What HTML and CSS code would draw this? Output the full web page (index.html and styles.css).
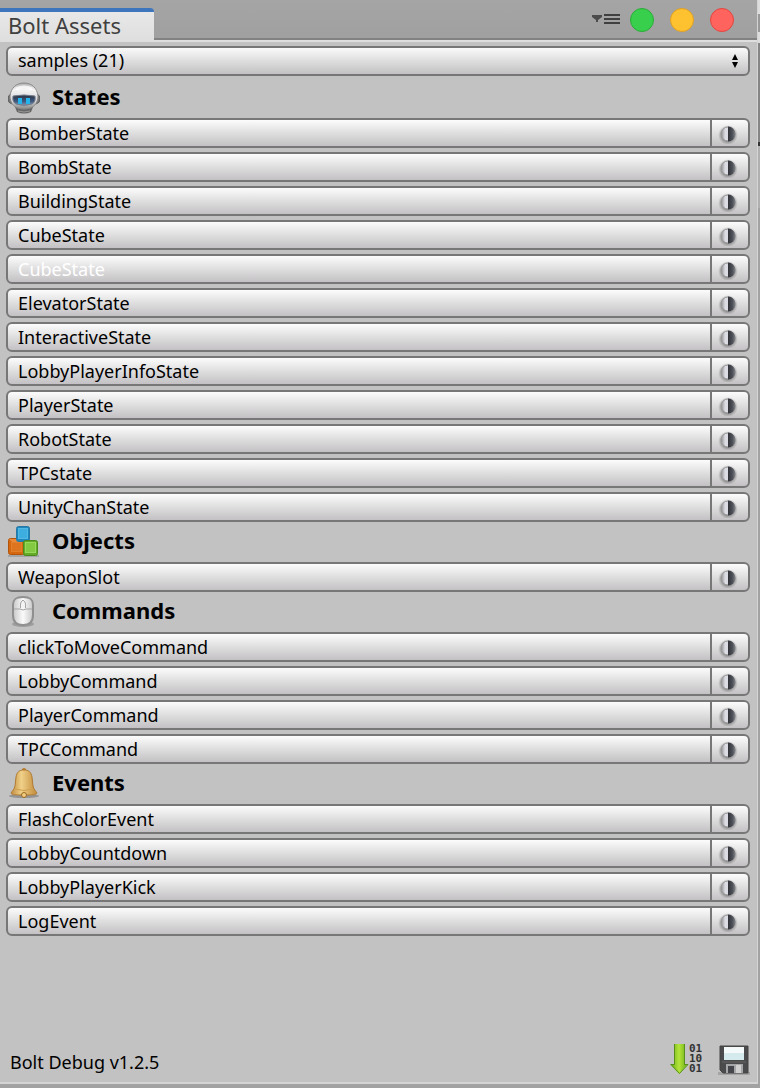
FILE: index.html
```
<!DOCTYPE html>
<html lang="en">
<head>
  <meta charset="UTF-8">
  <title>Bolt Assets</title>
  <link rel="stylesheet" href="styles.css">
</head>
<body>

<!-- shared gradients and the filter icon -->
<svg class="defs" aria-hidden="true">
  <defs>
    <linearGradient id="dark" x1="0" x2="1"><stop offset="0" stop-color="#303238"/><stop offset="0.6" stop-color="#50525a"/><stop offset="1" stop-color="#85878e"/></linearGradient>
    <linearGradient id="light" x1="0" x2="1"><stop offset="0" stop-color="#8c8c8c"/><stop offset="0.3" stop-color="#dcdce4"/></linearGradient>
    <radialGradient id="shade"><stop offset="0.6" stop-color="#555" stop-opacity="0.6"/><stop offset="1" stop-color="#777" stop-opacity="0"/></radialGradient>
    <symbol id="half" viewBox="0 0 20 20">
      <ellipse cx="10" cy="11" rx="10" ry="10" fill="url(#shade)"/>
      <circle cx="10" cy="10" r="7" fill="url(#light)" stroke="#999"/>
      <path d="M10 2.500a7.500 7.500 0 0 1 0 15z" fill="url(#dark)"/>
    </symbol>
  </defs>
</svg>

<div class="window">
  <header class="titlebar">
    <h1 class="tab">Bolt Assets</h1>
    <div class="controls">
      <button class="menu" aria-label="Window menu">
        <svg width="28" height="12" viewBox="0 0 28 12"><path d="M0 1h10v2L6 6v2H4V6L0 3z" fill="#4c4c4c"/><path d="M12 1h16M12 5h16M12 9h16" stroke="#404040" stroke-width="2"/></svg>
      </button>
      <button class="dot green" aria-label="Zoom"></button>
      <button class="dot yellow" aria-label="Minimize"></button>
      <button class="dot red" aria-label="Close"></button>
    </div>
  </header>

  <main class="content">
    <div class="picker">
      <select class="group" aria-label="Asset group">
        <option>samples (21)</option>
      </select>
      <svg class="arrows" width="6" height="14" viewBox="0 0 6 14"><path d="M3 0l3 6H0zM3 14l3-6H0z"/></svg>
    </div>

    <h2 class="heading">
      <svg class="icon" viewBox="0 0 32 32">
        <defs>
          <linearGradient id="skull" x2="0" y2="1"><stop offset="0" stop-color="#aaa"/><stop offset="0.25" stop-color="#f4f4f5"/><stop offset="0.7" stop-color="#d5d5d8"/><stop offset="1" stop-color="#888"/></linearGradient>
          <linearGradient id="visor" x2="0" y2="1"><stop offset="0" stop-color="#2a3240"/><stop offset="0.6" stop-color="#3d5880"/><stop offset="1" stop-color="#8097b5"/></linearGradient>
        </defs>
        <path d="M7 25h18l-2 5q-7 3-14 0z" fill="#666"/>
        <path d="M10 29q6 2 12 0" fill="none" stroke="#999"/>
        <path d="M3 12q-3 1-3 5t4 5zM29 12q3 1 3 5t-4 5z" fill="#777" stroke="#5e5e5e"/>
        <path d="M16 1C8 1 3 6 2 14c0 7 4 13 14 13s14-6 14-13C29 6 24 1 16 1z" fill="url(#skull)" stroke="#8a8a8a"/>
        <path d="M8 7q8-4 16 0" fill="none" stroke="#fff" stroke-width="3" opacity="0.7"/>
        <path d="M5 14q11-2 22 0 1 6-3 8-8 3-16 0-4-2-3-8z" fill="url(#visor)" stroke="#777e8b"/>
        <path d="M10 16h4v6h-4zM18 16h4v6h-4z" fill="#25b4ea"/>
      </svg>
      States
    </h2>
    <div class="row"><button class="name">BomberState</button><button class="mode" aria-label="Mode"><svg><use href="#half"/></svg></button></div>
    <div class="row"><button class="name">BombState</button><button class="mode" aria-label="Mode"><svg><use href="#half"/></svg></button></div>
    <div class="row"><button class="name">BuildingState</button><button class="mode" aria-label="Mode"><svg><use href="#half"/></svg></button></div>
    <div class="row"><button class="name">CubeState</button><button class="mode" aria-label="Mode"><svg><use href="#half"/></svg></button></div>
    <div class="row"><button class="name selected">CubeState</button><button class="mode" aria-label="Mode"><svg><use href="#half"/></svg></button></div>
    <div class="row"><button class="name">ElevatorState</button><button class="mode" aria-label="Mode"><svg><use href="#half"/></svg></button></div>
    <div class="row"><button class="name">InteractiveState</button><button class="mode" aria-label="Mode"><svg><use href="#half"/></svg></button></div>
    <div class="row"><button class="name">LobbyPlayerInfoState</button><button class="mode" aria-label="Mode"><svg><use href="#half"/></svg></button></div>
    <div class="row"><button class="name">PlayerState</button><button class="mode" aria-label="Mode"><svg><use href="#half"/></svg></button></div>
    <div class="row"><button class="name">RobotState</button><button class="mode" aria-label="Mode"><svg><use href="#half"/></svg></button></div>
    <div class="row"><button class="name">TPCstate</button><button class="mode" aria-label="Mode"><svg><use href="#half"/></svg></button></div>
    <div class="row"><button class="name">UnityChanState</button><button class="mode" aria-label="Mode"><svg><use href="#half"/></svg></button></div>

    <h2 class="heading">
      <svg class="icon" viewBox="0 0 32 32">
        <path d="M0 29h31v2H0z" fill="#777" opacity="0.4"/>
        <rect x="0.5" y="12.500" width="16" height="16" rx="2" fill="#d4670f" stroke="#b3540b"/>
        <path d="M1 13h15l-3 3H4z" fill="#e8893a"/>
        <rect x="3.500" y="16.500" width="10" height="9" fill="#dd7420" stroke="#e27f2c"/>
        <rect x="8.500" y="0.500" width="13" height="15" rx="2" fill="#1d86bd" stroke="#2679a5"/>
        <rect x="10.500" y="2.500" width="9" height="10" fill="#3eaee0" stroke="#52b9e5"/>
        <rect x="15.500" y="14.500" width="14" height="15" rx="2" fill="#62aa27" stroke="#4c8b1c"/>
        <rect x="17.500" y="16.500" width="10" height="10" fill="#83ca42" stroke="#98d85a"/>
      </svg>
      Objects
    </h2>
    <div class="row"><button class="name">WeaponSlot</button><button class="mode" aria-label="Mode"><svg><use href="#half"/></svg></button></div>

    <h2 class="heading">
      <svg class="icon" viewBox="0 0 32 32">
        <defs>
          <linearGradient id="mouse"><stop offset="0" stop-color="#c8c8c8"/><stop offset="0.5" stop-color="#fafafa"/><stop offset="1" stop-color="#c8c8c8"/></linearGradient>
        </defs>
        <ellipse cx="15" cy="28" rx="11" ry="3" fill="#777" opacity="0.5"/>
        <path d="M15 1C7 1 5 4 5 9v10c0 6 3 10 10 10s10-4 10-10V9c0-5-2-8-10-8z" fill="url(#mouse)" stroke="#909090" stroke-width="2"/>
        <path d="M6 13h6q3 2 6 0h6" fill="none" stroke="#a5a5a5"/>
        <path d="M12.500 12V8q0-2 2.500-4 2.500 2 2.500 4v4" fill="#f4f4f4" stroke="#a5a5a5"/>
      </svg>
      Commands
    </h2>
    <div class="row"><button class="name">clickToMoveCommand</button><button class="mode" aria-label="Mode"><svg><use href="#half"/></svg></button></div>
    <div class="row"><button class="name">LobbyCommand</button><button class="mode" aria-label="Mode"><svg><use href="#half"/></svg></button></div>
    <div class="row"><button class="name">PlayerCommand</button><button class="mode" aria-label="Mode"><svg><use href="#half"/></svg></button></div>
    <div class="row"><button class="name">TPCCommand</button><button class="mode" aria-label="Mode"><svg><use href="#half"/></svg></button></div>

    <h2 class="heading">
      <svg class="icon" viewBox="0 0 32 32">
        <defs>
          <linearGradient id="bell"><stop offset="0" stop-color="#c08c40"/><stop offset="0.4" stop-color="#f0d088"/><stop offset="1" stop-color="#c08a3a"/></linearGradient>
        </defs>
        <ellipse cx="16" cy="28" rx="15" ry="2" fill="#666" opacity="0.5"/>
        <path d="M14 4V1q2-2 4 0v3" fill="#b97a2c"/>
        <path d="M16 2c-5 0-7 2-8 7l-1 9c-1 4-3 5-4 7 1 2 4 2 13 2s12 0 13-2c-1-2-3-3-4-7l-1-9c-1-5-3-7-8-7z" fill="url(#bell)" stroke="#b07b33"/>
        <path d="M7 21q9 3 18 0" fill="none" stroke="#d0a050"/>
        <circle cx="16" cy="27" r="2.500" fill="#f0cc80" stroke="#9a6924"/>
      </svg>
      Events
    </h2>
    <div class="row"><button class="name">FlashColorEvent</button><button class="mode" aria-label="Mode"><svg><use href="#half"/></svg></button></div>
    <div class="row"><button class="name">LobbyCountdown</button><button class="mode" aria-label="Mode"><svg><use href="#half"/></svg></button></div>
    <div class="row"><button class="name">LobbyPlayerKick</button><button class="mode" aria-label="Mode"><svg><use href="#half"/></svg></button></div>
    <div class="row"><button class="name">LogEvent</button><button class="mode" aria-label="Mode"><svg><use href="#half"/></svg></button></div>
  </main>

  <footer class="status">
    <span>Bolt Debug v1.2.5</span>
    <div class="tools">
      <button class="tool" aria-label="Compile">
        <svg viewBox="0 0 32 32">
          <defs><linearGradient id="arrow"><stop offset="0" stop-color="#62a814"/><stop offset="0.5" stop-color="#b4e43a"/><stop offset="1" stop-color="#62a814"/></linearGradient></defs>
          <path d="M4 0h11v20h3l-9 10L0 20h4z" fill="url(#arrow)"/>
          <path d="M4.500 0v20.500H1l8.500 9 8.500-9h-3.500V0" fill="none" stroke="#578f1a"/>
          <g class="bits"><text x="19" y="8">01</text><text x="19" y="18">10</text><text x="19" y="28">01</text></g>
        </svg>
      </button>
      <button class="tool" aria-label="Save">
        <svg viewBox="0 0 32 32">
          <path d="M0 28h32v3H0z" fill="#777" opacity="0.4"/>
          <path d="M2 2h28v27H5l-3-3z" fill="#4a4b4d" stroke="#444"/>
          <path d="M6 3h20v13H6z" fill="#d5eaec"/>
          <path d="M6 3h20v6H6z" fill="#f4fafa"/>
          <path d="M8 20h17v9H8z" fill="#a4a6a8"/>
          <path d="M10 22h6v7h-6z" fill="#45464c"/>
          <path d="M18 21h5v8h-5z" fill="#d0d0d0"/>
          <path d="M4 18h24" stroke="#666"/>
        </svg>
      </button>
    </div>
  </footer>
</div>

</body>
</html>
```
FILE: styles.css
```
* { box-sizing: border-box; }

body {
  margin: 0;
  padding: 0 2px 4px 0;
  min-height: 100vh;
  display: flex;
  background: linear-gradient(#ddd 14px, #999 14px, #999 32px, #ddd 32px, #ddd 43px, #858585 43px, #858585 142px, #333 142px, #333 146px, #b0b0b0 146px, #b0b0b0 208px, #a2a2a2 208px);
  font-family: "Lucida Grande", "Noto Sans", sans-serif;
  font-size: 18px;
  color: #000;
}

button, select { font: inherit; color: inherit; }
button { padding: 0; border: none; background: none; }
svg { display: block; }
.defs { position: absolute; width: 0; height: 0; }

.window {
  flex: 1;
  display: flex;
  flex-direction: column;
  background: #c2c2c2;
  border-right: 1px solid #d4d4d4;
  border-bottom: 2px solid #d4d4d4;
}

/* title bar */
.titlebar {
  display: flex;
  justify-content: space-between;
  align-items: flex-end;
  height: 42px;
  background: linear-gradient(#a5a5a5, #a0a0a0 38px, #828282 38px, #828282 40px, #dedede 40px);
}
.tab {
  margin: 0;
  width: 154px;
  height: 34px;
  padding-left: 8px;
  border-top: 4px solid #3e76bd;
  border-radius: 0 4px 0 0;
  background: linear-gradient(#e8e8e8, #dedede);
  font-size: 22px;
  font-weight: normal;
  line-height: 26px;
  color: #404040;
}
.controls {
  display: flex;
  align-items: center;
  gap: 16px;
  height: 42px;
  padding: 0 23px 2px 0;
}
.menu { margin-right: -6px; }
.dot {
  width: 24px;
  height: 24px;
  border: 1px solid;
  border-radius: 50%;
}
.green { background: #37cf4b; border-color: #2bac39; }
.yellow { background: #fec12f; border-color: #dfa023; }
.red { background: #fe635d; border-color: #e2463f; }

/* asset list */
.content {
  flex: 1;
  padding: 4px 7px 0 6px;
}
.picker {
  position: relative;
}
.group {
  appearance: none;
  display: block;
  width: 100%;
  height: 30px;
  padding: 0 10px 2px;
  border: 2px solid #777;
  border-radius: 6px;
  background: linear-gradient(#fafafa, #c3c1c3);
}
.arrows {
  position: absolute;
  top: 8px;
  right: 12px;
  pointer-events: none;
}
.heading {
  display: flex;
  align-items: flex-start;
  gap: 12px;
  height: 36px;
  margin: 0;
  padding: 0 2px;
  font-size: 22px;
  line-height: 28px;
}
.picker + .heading {
  margin: 6px 0 0;
}
.icon {
  width: 32px;
  height: 32px;
}
.row {
  display: flex;
  height: 30px;
  margin-bottom: 4px;
  border: 2px solid #777;
  border-radius: 6px;
  background: linear-gradient(#fcfcfc, #c3c1c3);
}
.name {
  flex: 1;
  padding-left: 10px;
  text-align: left;
  line-height: 26px;
}
.selected { color: #fff; }
.mode {
  width: 38px;
  padding: 1px 0 0 6px;
  border-left: 2px solid #777;
}
.mode svg {
  width: 20px;
  height: 20px;
}

/* footer */
.status {
  display: flex;
  justify-content: space-between;
  align-items: flex-end;
  padding: 0 7px 6px 10px;
  line-height: 28px;
}
.tools {
  display: flex;
  gap: 16px;
}
.tool svg {
  width: 32px;
  height: 32px;
}
.bits {
  font: bold 11px "DejaVu Sans Mono", monospace;
  fill: #333;
}
```
